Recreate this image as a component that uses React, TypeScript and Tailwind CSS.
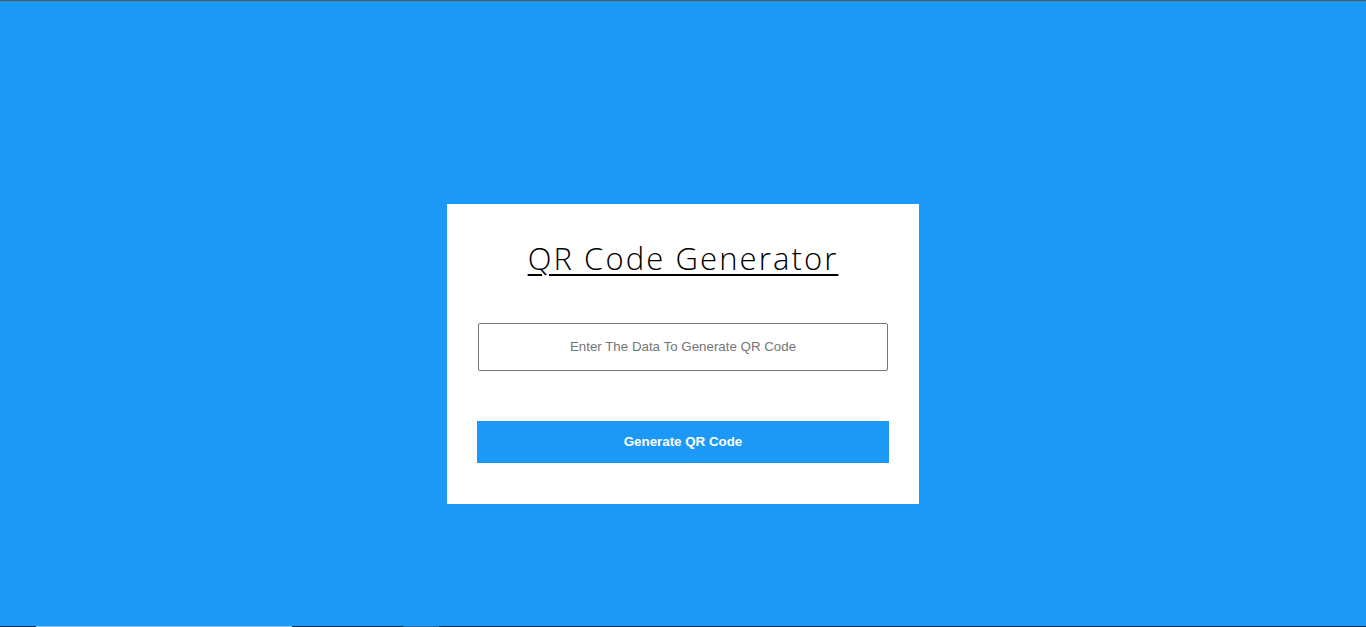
import React from 'react';

const App = () => {
  return (
    <div className="h-[627px] w-full bg-[#1c98f7] border-t border-[#555] flex flex-col overflow-hidden">
      <div className="flex-1 flex justify-center pt-[203px]">
        <div className="w-[472px] h-[300px] bg-white flex flex-col items-center">
          <h1 className="mt-[34px] text-[31px] leading-[40px] font-light tracking-[2.1px] underline decoration-[2px] underline-offset-[4px] text-black font-['Open_Sans',sans-serif]">
            QR Code Generator
          </h1>
          <input
            type="text"
            placeholder="Enter The Data To Generate QR Code"
            className="mt-[45px] w-[410px] h-[48px] pb-[2px] border border-[#777] rounded-[2px] text-center text-[13.33px] text-black placeholder:text-[#757575] font-['Liberation_Sans',Arial,sans-serif] outline-none"
          />
          <button className="mt-[50px] w-[412px] h-[42px] bg-[#1c98f7] text-white text-[13.33px] font-bold font-['Liberation_Sans',Arial,sans-serif]">
            Generate QR Code
          </button>
        </div>
      </div>
      <div className="h-px flex">
        <div className="w-[36px] bg-[#0b3358]" />
        <div className="w-[256px] bg-[#8fc7ee]" />
        <div className="w-[111px] bg-[#0b3358]" />
        <div className="w-[36px] bg-[#2a6a9c]" />
        <div className="flex-1 bg-[#0b3358]" />
      </div>
    </div>
  );
};

export default App;
